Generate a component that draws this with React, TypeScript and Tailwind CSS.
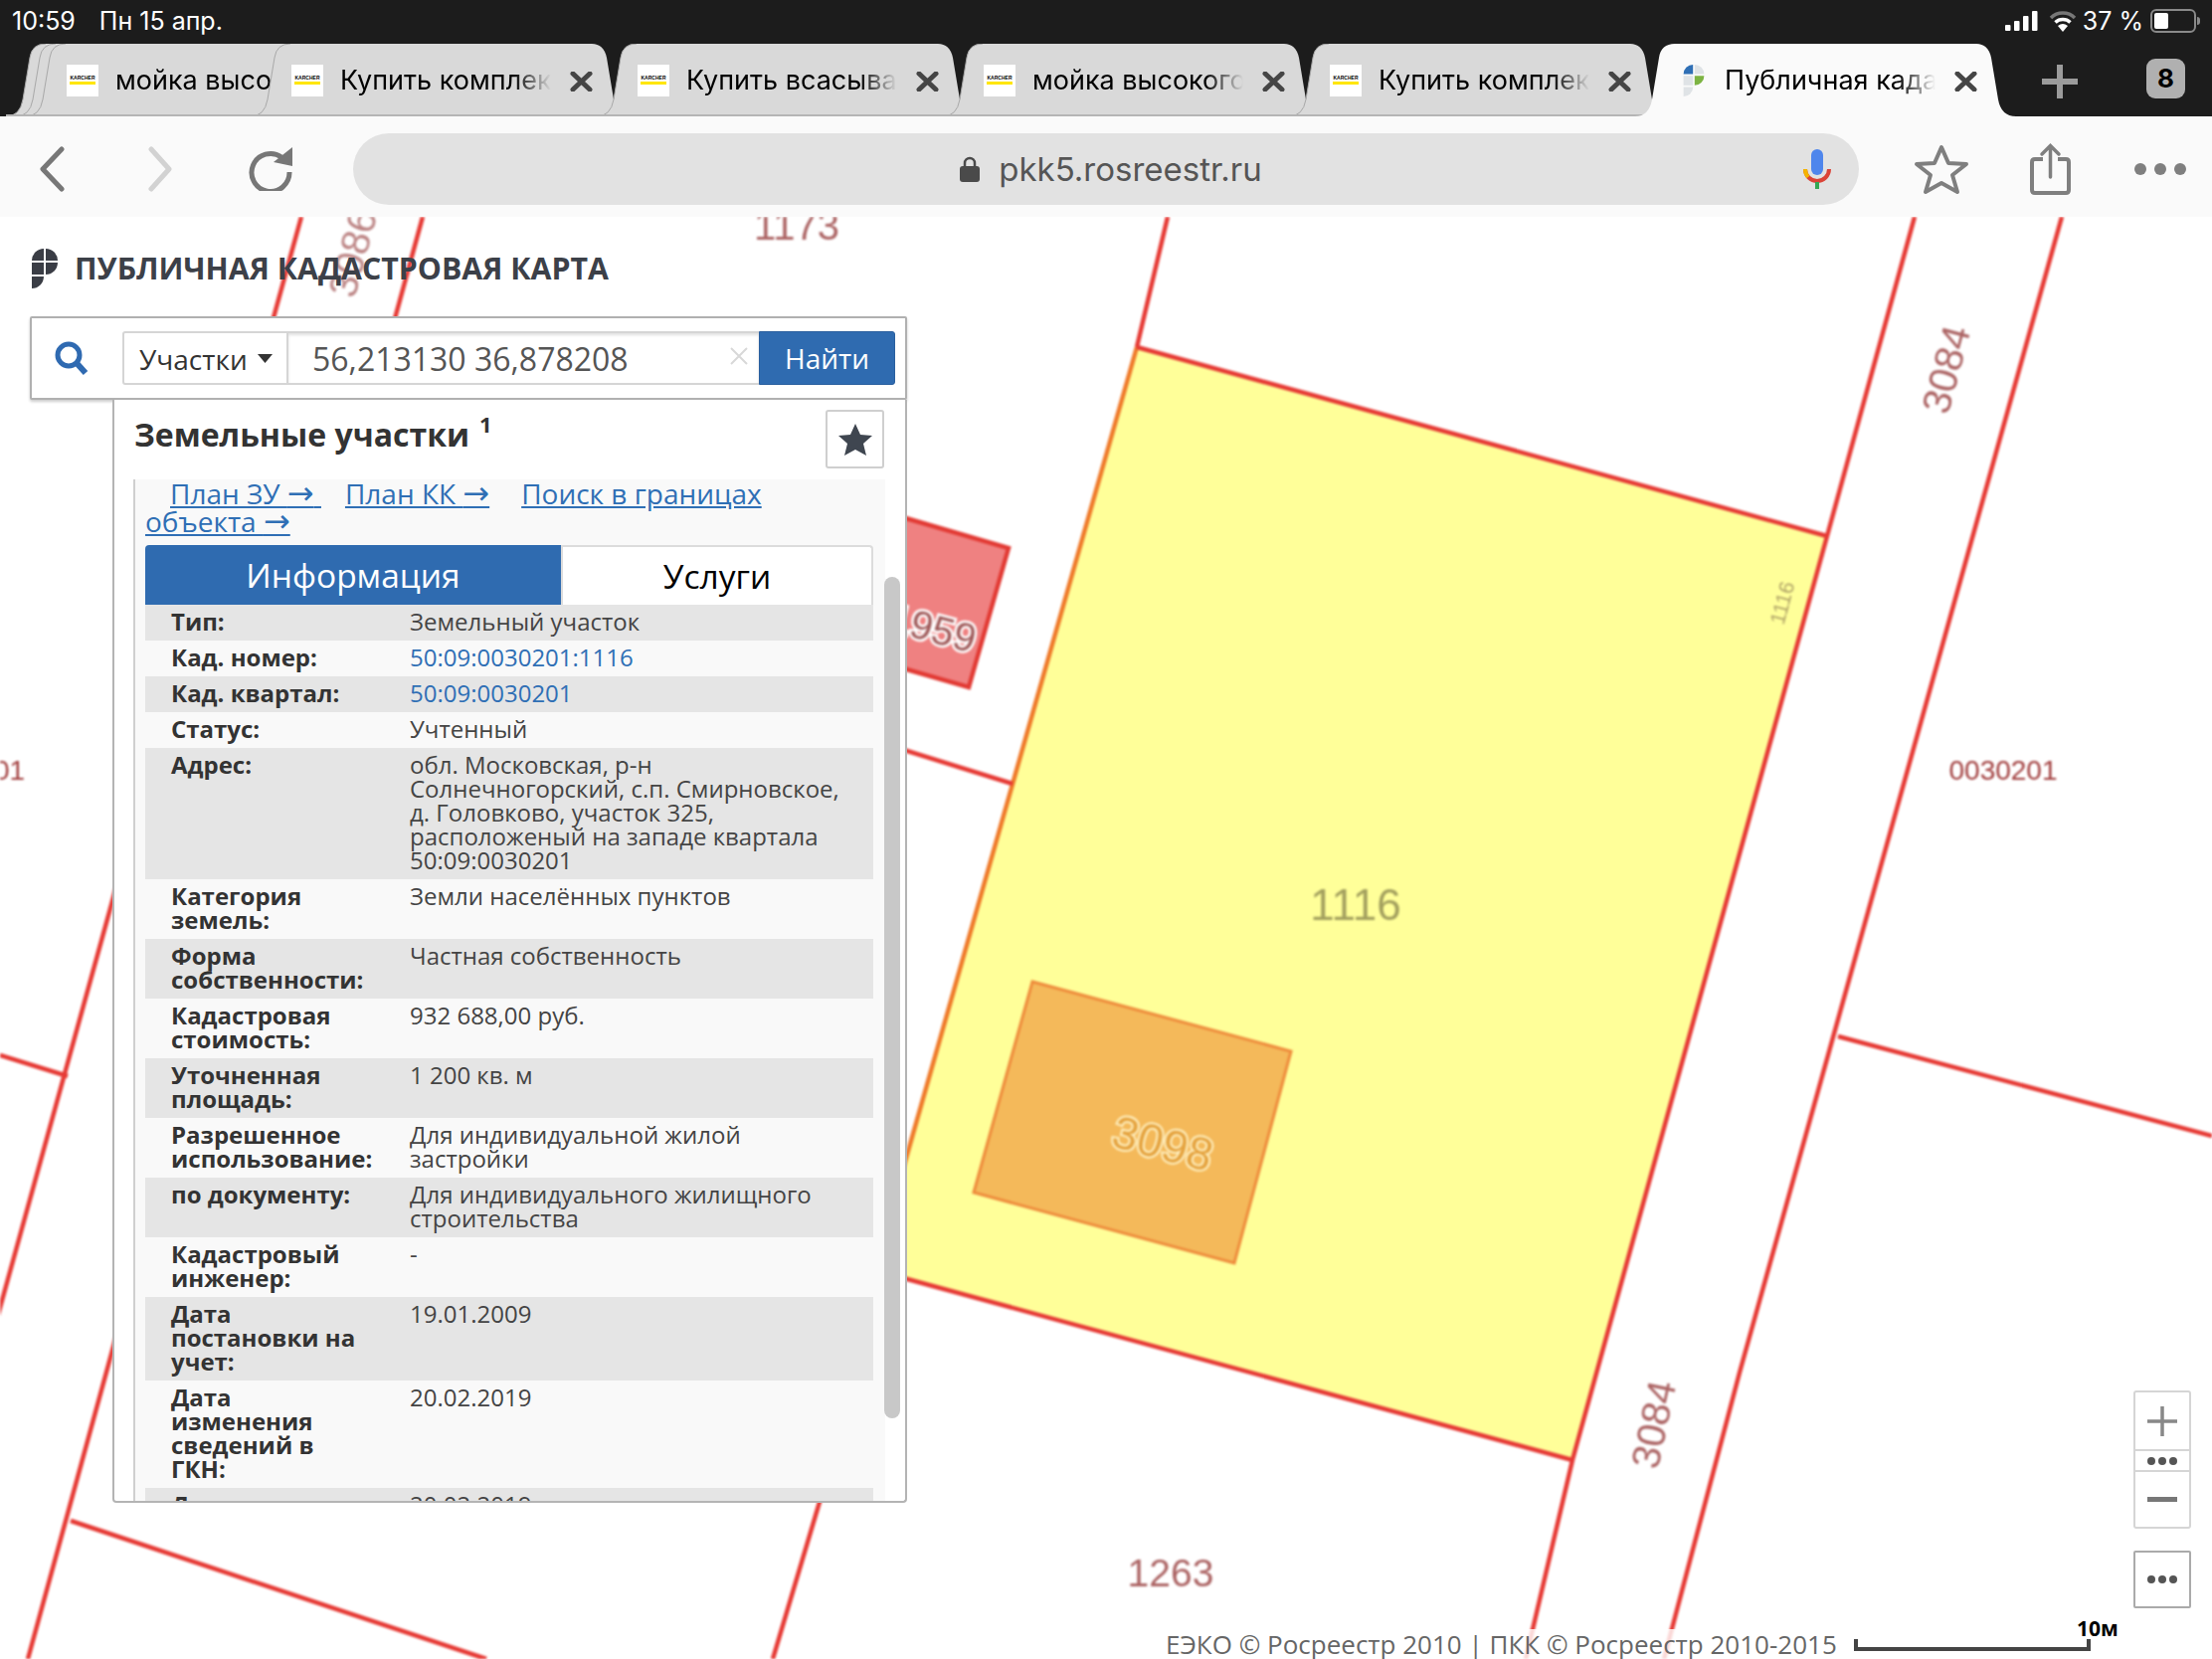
import React from "react";

const TAB_PATH = "M0 73 Q14 73 17 56 L24 14 Q26 0 40 0 L343 0 Q355 0 358 14 L365 56 Q368 73 383 73 Z";

function TabShape({ active }: { active?: boolean }) {
  return (
    <svg className="absolute inset-0 w-[383px] h-[73px]" viewBox="0 0 383 73">
      <path d={TAB_PATH} fill={active ? "#fafafa" : "#d9d9d9"} />
      {!active && <path d="M0 73 Q14 73 17 56 L24 14 Q26 0 40 0" fill="none" stroke="#a8a8a8" strokeWidth="1" />}
      {!active && <path d="M0 72 H383" stroke="#b5b5b5" strokeWidth="2" />}
    </svg>
  );
}

function Karcher() {
  return (
    <div className="w-[32px] h-[32px] bg-white flex flex-col items-center justify-center shrink-0">
      <div className="w-[26px] h-[5px] text-[5px] leading-[5px] font-bold text-black text-center overflow-hidden font-['Liberation_Sans',sans-serif]">KÄRCHER</div>
      <div className="w-[26px] h-[3px] bg-[#ffe600] mt-[1px]" />
    </div>
  );
}

function PkkLogo({ colored, className }: { colored?: boolean; className: string }) {
  const d = "#3a3d45";
  return (
    <svg className={className} viewBox="0 0 26 40">
      <path d="M12 0 A12 12 0 0 0 0 12 H12 Z" fill={colored ? "#2f6fb5" : d} />
      <path d="M14 0 A12 12 0 0 1 26 12 H14 Z" fill={colored ? "#dfe3e6" : d} />
      <rect x="0" y="14" width="12" height="12" fill={colored ? "#dfe3e6" : d} />
      <path d="M14 14 H26 A12 12 0 0 1 14 26 Z" fill={colored ? "#7cb342" : d} />
      <path d="M0 28 H12 A12 12 0 0 1 0 40 Z" fill={colored ? "#dfe3e6" : d} />
    </svg>
  );
}

function CloseX() {
  return (
    <svg className="absolute left-[321px] top-[28px] w-[23px] h-[20px]" viewBox="0 0 23 20">
      <path d="M3 2 L20 18 M20 2 L3 18" stroke="#454545" strokeWidth="5" strokeLinecap="round" />
    </svg>
  );
}

function Tab({ title, active, first, noClose }: { title: string; active?: boolean; first?: boolean; noClose?: boolean }) {
  return (
    <div className={first ? "relative w-[383px] h-[73px] shrink-0 -mr-[157px]" : "relative w-[383px] h-[73px] shrink-0 -mr-[35px]"}>
      {first && (
        <>
          <div className="absolute -left-[20px] top-0"><TabShape /></div>
          <div className="absolute -left-[10px] top-0"><TabShape /></div>
        </>
      )}
      <TabShape active={active} />
      <div className="relative h-full flex items-center pl-[41px] gap-[17px]">
        {active ? (
          <div className="w-[32px] flex justify-center pl-[4px]"><PkkLogo colored className="w-[22px] h-[32px]" /></div>
        ) : (
          <Karcher />
        )}
        <span className="w-[212px] whitespace-nowrap overflow-hidden text-[27px] leading-[34px] text-black [mask-image:linear-gradient(to_right,black_82%,transparent_100%)]">{title}</span>
      </div>
      {!noClose && <CloseX />}
    </div>
  );
}

function Row({ label, children, gray }: { label: React.ReactNode; children: React.ReactNode; gray: boolean }) {
  return (
    <div className={gray ? "flex bg-[#e5e5e5] pt-[5px] pb-[7px]" : "flex bg-[#f9f9f9] pt-[5px] pb-[7px]"}>
      <div className="w-[206px] ml-[26px] mr-[34px] shrink-0 font-bold text-[#333]">{label}</div>
      <div className="flex-1 text-[#444]">{children}</div>
    </div>
  );
}

const LINK = "text-[#2f6fb5]";

const rows: [React.ReactNode, React.ReactNode][] = [
  ["Тип:", "Земельный участок"],
  ["Кад. номер:", <span className={LINK}>50:09:0030201:1116</span>],
  ["Кад. квартал:", <span className={LINK}>50:09:0030201</span>],
  ["Статус:", "Учтенный"],
  ["Адрес:", <>обл. Московская, р-н<br />Солнечногорский, с.п. Смирновское,<br />д. Головково, участок 325,<br />расположеный на западе квартала<br />50:09:0030201</>],
  ["Категория земель:", "Земли населённых пунктов"],
  ["Форма собственности:", "Частная собственность"],
  ["Кадастровая стоимость:", "932 688,00 руб."],
  ["Уточненная площадь:", "1 200 кв. м"],
  ["Разрешенное использование:", <>Для индивидуальной жилой<br />застройки</>],
  ["по документу:", <>Для индивидуального жилищного<br />строительства</>],
  ["Кадастровый инженер:", "-"],
  ["Дата постановки на учет:", "19.01.2009"],
  [<>Дата изменения сведений в<br />ГКН:</>, "20.02.2019"],
  ["Дата выгрузки сведений:", "20.02.2019"],
];

function MapCanvas() {
  const red = "#e63a35";
  const lbl = "#ac6464";
  return (
    <svg className="absolute inset-0 w-[2224px] h-[1450px] blur-[0.8px] font-['Liberation_Sans',sans-serif]" viewBox="0 218 2224 1450">
      <polygon points="1143,349 1837,539 1581,1468 879,1277" fill="#ffff99" />
      <path d="M1143 349 L879 1277" stroke="#ef7a2a" strokeWidth="4.5" fill="none" />
      <path d="M1143 349 L1837 539 M1581 1468 L879 1277" stroke={red} strokeWidth="4.5" fill="none" />
      <polygon points="1038,987 1298,1057 1241,1270 979,1199" fill="#f4b95a" stroke="#ee8c3c" strokeWidth="3" />
      <polygon points="880,512 1014,551 974,691 880,664" fill="#ef8181" stroke="#e23a34" strokeWidth="4.5" />
      <g stroke={red} strokeWidth="4.5" fill="none">
        <path d="M1174 218 L1143 349" />
        <path d="M1925 218 L1837 539 L1581 1468 L1534 1668" />
        <path d="M2073 218 L1749 1380 L1673 1668" />
        <path d="M1848 1042 L2224 1142" />
        <path d="M303 218 L-5 1333" />
        <path d="M425 218 L28 1668" />
        <path d="M0 1061 L68 1082" />
        <path d="M71 1529 L489 1668" />
        <path d="M830 1490 L777 1668" />
        <path d="M880 745 L1018 788" />
      </g>
      <text x="1363" y="925" fontSize="44" fill="#a3a05e" textAnchor="middle">1116</text>
      <text transform="translate(1799,608) rotate(-75)" fontSize="21" fill="#b0a468" textAnchor="middle">1116</text>
      <text transform="translate(1165,1165) rotate(15)" fontSize="46" fill="#e5a33f" textAnchor="middle" stroke="#fff0c0" strokeWidth="4" paintOrder="stroke">3098</text>
      <text transform="translate(934,645) rotate(15)" fontSize="40" fill="#a05a5a" textAnchor="middle" stroke="#ffffff" strokeWidth="5" paintOrder="stroke">1959</text>
      <text transform="translate(1970,375) rotate(-75)" fontSize="40" fill={lbl} textAnchor="middle">3084</text>
      <text transform="translate(1676,1435) rotate(-78)" fontSize="40" fill={lbl} textAnchor="middle">3084</text>
      <text x="1177" y="1595" fontSize="39" fill={lbl} textAnchor="middle">1263</text>
      <text x="2014" y="784" fontSize="28" fill="#a03c3c" textAnchor="middle">0030201</text>
      <text x="-6" y="784" fontSize="28" fill="#a03c3c">01</text>
      <text x="801" y="241" fontSize="40" fill={lbl} textAnchor="middle">1173</text>
      <text transform="translate(368,258) rotate(-75)" fontSize="40" fill="#bc8484" textAnchor="middle">3086</text>
    </svg>
  );
}

function Dots({ className }: { className: string }) {
  return (
    <svg className={className} viewBox="0 0 30 8">
      <circle cx="4" cy="4" r="4" fill="#555" />
      <circle cx="15" cy="4" r="4" fill="#555" />
      <circle cx="26" cy="4" r="4" fill="#555" />
    </svg>
  );
}

const ARROW = "font-['DejaVu_Sans',sans-serif] text-[32px] leading-[0px]";

export default function App() {
  return (
    <div className="w-[2224px] h-[1668px] flex flex-col overflow-hidden bg-white font-['Inter',sans-serif]">
      {/* status bar */}
      <div className="h-[44px] shrink-0 bg-[#1c1c1c] text-white text-[25px] leading-[28px] flex items-center pl-[12px] pr-[12px] pb-[2px]">
        <span>10:59</span>
        <span className="ml-[24px]">Пн 15 апр.</span>
        <div className="ml-auto flex items-center">
          <svg className="w-[34px] h-[20px]" viewBox="0 0 34 20">
            <rect x="0" y="14" width="5.5" height="6" rx="1" fill="#fff" />
            <rect x="9" y="10" width="5.5" height="10" rx="1" fill="#fff" />
            <rect x="18" y="5" width="5.5" height="15" rx="1" fill="#fff" />
            <rect x="27" y="0" width="5.5" height="20" rx="1" fill="#fff" />
          </svg>
          <svg className="w-[28px] h-[21px] ml-[10px]" viewBox="0 0 28 21">
            <path d="M2 7 A17 17 0 0 1 26 7" stroke="#777" strokeWidth="3.5" fill="none" />
            <path d="M6.5 11.5 A11 11 0 0 1 21.5 11.5" stroke="#fff" strokeWidth="3.5" fill="none" />
            <path d="M9 15 Q14 11 19 15 L14 21 Z" fill="#fff" />
          </svg>
          <span className="ml-[6px]">37 %</span>
          <div className="ml-[7px] w-[46px] h-[24px] border-2 border-[#8a8a8a] rounded-[6px] p-[2px]">
            <div className="w-[14px] h-full bg-white rounded-[2px]" />
          </div>
          <div className="w-[3px] h-[8px] ml-[1px] bg-[#8a8a8a] rounded-r-sm" />
        </div>
      </div>

      {/* tabs */}
      <div className="h-[73px] shrink-0 bg-[#1c1c1c] flex pl-[26px]">
        <Tab first noClose title="мойка высокого" />
        <Tab title="Купить комплект" />
        <Tab title="Купить всасывающий" />
        <Tab title="мойка высокого" />
        <Tab title="Купить комплект" />
        <Tab active title="Публичная кадастровая" />
        <svg className="w-[36px] h-[34px] ml-[61px] mt-[21px] shrink-0" viewBox="0 0 36 34">
          <path d="M18 0 V34 M0 17 H36" stroke="#9b9b9b" strokeWidth="6" strokeLinecap="round" />
        </svg>
        <div className="w-[39px] h-[40px] ml-[69px] mt-[15px] shrink-0 bg-[#b0b0b0] rounded-[9px] text-black font-bold text-[26px] leading-[40px] text-center">8</div>
      </div>

      {/* toolbar */}
      <div className="h-[101px] shrink-0 bg-[#fafafa] flex items-center pl-[39px] pt-[4px]">
        <svg className="w-[26px] h-[46px] shrink-0" viewBox="0 0 26 46">
          <path d="M23 3 L4 23 L23 43" stroke="#777" strokeWidth="5" fill="none" strokeLinecap="round" strokeLinejoin="round" />
        </svg>
        <svg className="w-[25px] h-[46px] ml-[84px] shrink-0" viewBox="0 0 25 46">
          <path d="M3 3 L21 23 L3 43" stroke="#d2d2d2" strokeWidth="5" fill="none" strokeLinecap="round" strokeLinejoin="round" />
        </svg>
        <svg className="w-[44px] h-[44px] ml-[76px] shrink-0" viewBox="0 0 44 44">
          <path d="M33 10 A19 19 0 1 0 41 25" stroke="#777" strokeWidth="5" fill="none" />
          <polygon points="25,15 44,0 44,19" fill="#777" />
        </svg>
        <div className="relative ml-[61px] w-[1514px] h-[72px] shrink-0 rounded-full bg-[#e2e2e2] flex items-center justify-center pl-[10px]">
          <svg className="w-[20px] h-[26px] shrink-0" viewBox="0 0 20 26">
            <path d="M5 11 V7 A5 5 0 0 1 15 7 V11" stroke="#4a4a4a" strokeWidth="2.5" fill="none" />
            <rect x="0" y="10" width="20" height="16" rx="3" fill="#4a4a4a" />
          </svg>
          <span className="ml-[19px] text-[33px] leading-[40px] text-[#555]">pkk5.rosreestr.ru</span>
          <svg className="absolute left-[1458px] top-[16px] w-[28px] h-[40px]" viewBox="0 0 28 40">
            <rect x="8" y="0" width="12" height="26" rx="6" fill="#4f86ec" />
            <path d="M2 20 A12 12 0 0 0 26 20" stroke="#db4437" strokeWidth="4" fill="none" />
            <path d="M2 20 A12 12 0 0 0 5 28" stroke="#f4b400" strokeWidth="4" fill="none" />
            <rect x="12" y="33" width="4" height="7" fill="#34a853" />
          </svg>
        </div>
        <svg className="w-[56px] h-[52px] ml-[55px] shrink-0" viewBox="0 0 56 52">
          <polygon points="28,4 35,20 53,21 39,32 44,49 28,40 12,49 17,32 3,21 21,20" stroke="#7f7f7f" strokeWidth="4" fill="none" strokeLinejoin="round" />
        </svg>
        <svg className="w-[41px] h-[52px] ml-[61px] shrink-0" viewBox="0 0 41 52">
          <path d="M13 16 H5 Q2 16 2 19 V47 Q2 50 5 50 H36 Q39 50 39 47 V19 Q39 16 36 16 H28" stroke="#7f7f7f" strokeWidth="4" fill="none" />
          <path d="M20.5 34 V3 M12 11 L20.5 2.5 L29 11" stroke="#7f7f7f" strokeWidth="3.5" fill="none" strokeLinecap="round" />
        </svg>
        <svg className="w-[52px] h-[12px] ml-[64px] shrink-0" viewBox="0 0 52 12">
          <circle cx="6" cy="6" r="6" fill="#7f7f7f" />
          <circle cx="26" cy="6" r="6" fill="#7f7f7f" />
          <circle cx="46" cy="6" r="6" fill="#7f7f7f" />
        </svg>
      </div>

      {/* map */}
      <div className="relative flex-1 overflow-hidden bg-white font-['Open_Sans',sans-serif]">
        <MapCanvas />

        <div className="absolute left-[32px] top-[32px] flex items-center gap-[17px]">
          <PkkLogo className="w-[26px] h-[40px]" />
          <span className="text-[30.3px] leading-[40px] font-bold text-[#3c4048] whitespace-nowrap">ПУБЛИЧНАЯ КАДАСТРОВАЯ КАРТА</span>
        </div>

        {/* search + results */}
        <div className="absolute left-[30px] top-[100px] w-[882px]">
          <div className="h-[84px] bg-white border-2 border-[#b0b0b0] rounded-[2px] shadow-[0_2px_3px_rgba(0,0,0,0.2)] flex items-center pl-[23px]">
            <svg className="w-[34px] h-[34px] shrink-0" viewBox="0 0 34 34">
              <circle cx="14" cy="14" r="11" stroke="#2f6ab1" strokeWidth="5" fill="none" />
              <path d="M22 22 L31 32" stroke="#2f6ab1" strokeWidth="6" />
            </svg>
            <div className="ml-[34px] w-[167px] h-[54px] shrink-0 border-2 border-[#d5d5d5] rounded-l-[3px] flex items-center pl-[15px] pt-[1px] text-[#333] text-[28px]">
              Участки
              <svg className="w-[15px] h-[9px] ml-[10px]" viewBox="0 0 15 9"><polygon points="0,0 15,0 7.5,9" fill="#333" /></svg>
            </div>
            <div className="relative w-[473px] h-[54px] shrink-0 border-y-2 border-[#d5d5d5] shadow-[inset_0_2px_3px_rgba(0,0,0,0.12)] flex items-center pl-[24px] pt-[2px] text-[32px] text-[#555]">
              56,213130 36,878208
              <svg className="absolute right-[11px] top-[14px] w-[18px] h-[18px]" viewBox="0 0 18 18">
                <path d="M1 1 L17 17 M17 1 L1 17" stroke="#d8d8d8" strokeWidth="2" />
              </svg>
            </div>
            <div className="w-[137px] h-[54px] shrink-0 bg-[#2f6bb0] rounded-r-[3px] border border-[#2a5f9e] text-white text-[28px] flex items-center justify-center">Найти</div>
          </div>

          <div className="relative ml-[83px] w-[799px] h-[1109px] bg-white border-x-2 border-b-2 border-[#b4b4b4] rounded-b-[4px] flex flex-col overflow-hidden">
            <div className="h-[80px] shrink-0 flex items-start justify-between pt-[10px] pl-[20px] pr-[21px]">
              <div className="text-[32px] leading-[50px] font-bold text-[#333] whitespace-nowrap">
                Земельные участки
                <sup className="ml-[10px] text-[22px] top-[-14px]">1</sup>
              </div>
              <div className="w-[59px] h-[59px] border-2 border-[#cfcfcf] rounded-[3px] bg-white flex items-center justify-center">
                <svg className="w-[34px] h-[32px]" viewBox="0 0 34 32">
                  <polygon points="17,0 22,11 34,12 25,20 28,32 17,26 6,32 9,20 0,12 12,11" fill="#3f4650" />
                </svg>
              </div>
            </div>
            <div className="ml-[19px] w-[756px] flex-1 min-h-0 border-l-2 border-[#cfcfcf] bg-[#f9f9f9] pl-[10px] pr-[12px] overflow-hidden text-[24px] leading-[24px]">
              <div className="h-[56px] text-[28px] leading-[28px] text-[#2f6fb5] underline indent-[25px]">
                <span className="mr-[24px]">План ЗУ <span className={ARROW}>→</span> </span>
                <span className="mr-[32px]">План КК <span className={ARROW}>→</span></span>
                <span>Поиск в границах<br />объекта <span className={ARROW}>→</span></span>
              </div>
              <div className="flex h-[60px] mt-[10px] text-[33.5px]">
                <div className="w-[418px] bg-[#2f6bb0] text-white rounded-tl-[4px] flex items-center justify-center">Информация</div>
                <div className="flex-1 bg-white border-2 border-b-0 border-[#dcdcdc] rounded-tr-[4px] text-black flex items-center justify-center">Услуги</div>
              </div>
              {rows.map(([l, v], i) => (
                <Row key={i} label={l} gray={i % 2 === 0}>{v}</Row>
              ))}
            </div>
            <div className="absolute right-[5px] top-[178px] w-[16px] h-[846px] bg-[#c8c8c8] rounded-full" />
          </div>
        </div>

        {/* zoom controls */}
        <div className="absolute left-[2145px] top-[1180px] w-[58px] flex flex-col items-center gap-[22px]">
          <div className="w-full h-[139px] bg-white border-2 border-[#d5d5d5] rounded-[3px] flex flex-col">
            <div className="h-[57px] flex items-center justify-center">
              <svg className="w-[30px] h-[30px]" viewBox="0 0 30 30"><path d="M15 0 V30 M0 15 H30" stroke="#888" strokeWidth="3.5" /></svg>
            </div>
            <div className="h-[23px] border-y-2 border-[#d5d5d5] flex items-center justify-center"><Dots className="w-[30px] h-[8px]" /></div>
            <div className="flex-1 flex items-center justify-center">
              <svg className="w-[30px] h-[5px]" viewBox="0 0 30 5"><rect width="30" height="5" fill="#777" /></svg>
            </div>
          </div>
          <div className="w-full h-[58px] bg-white border-2 border-[#aaa] rounded-[2px] flex items-center justify-center"><Dots className="w-[30px] h-[8px]" /></div>
        </div>

        {/* attribution + scale */}
        <div className="absolute left-[1170px] bottom-0 h-[30px] flex items-start">
          <span className="bg-white/80 text-[26px] leading-[30px] text-[#666] whitespace-nowrap px-[2px]">ЕЭКО © Росреестр 2010 | ПКК © Росреестр 2010-2015</span>
          <div className="relative ml-[15px] mt-[10px] w-[238px] h-[12px] border-x-4 border-b-4 border-[#444]">
            <span className="absolute -right-[32px] -top-[24px] text-[21px] leading-[26px] font-bold text-black">10м</span>
          </div>
        </div>
      </div>
    </div>
  );
}
